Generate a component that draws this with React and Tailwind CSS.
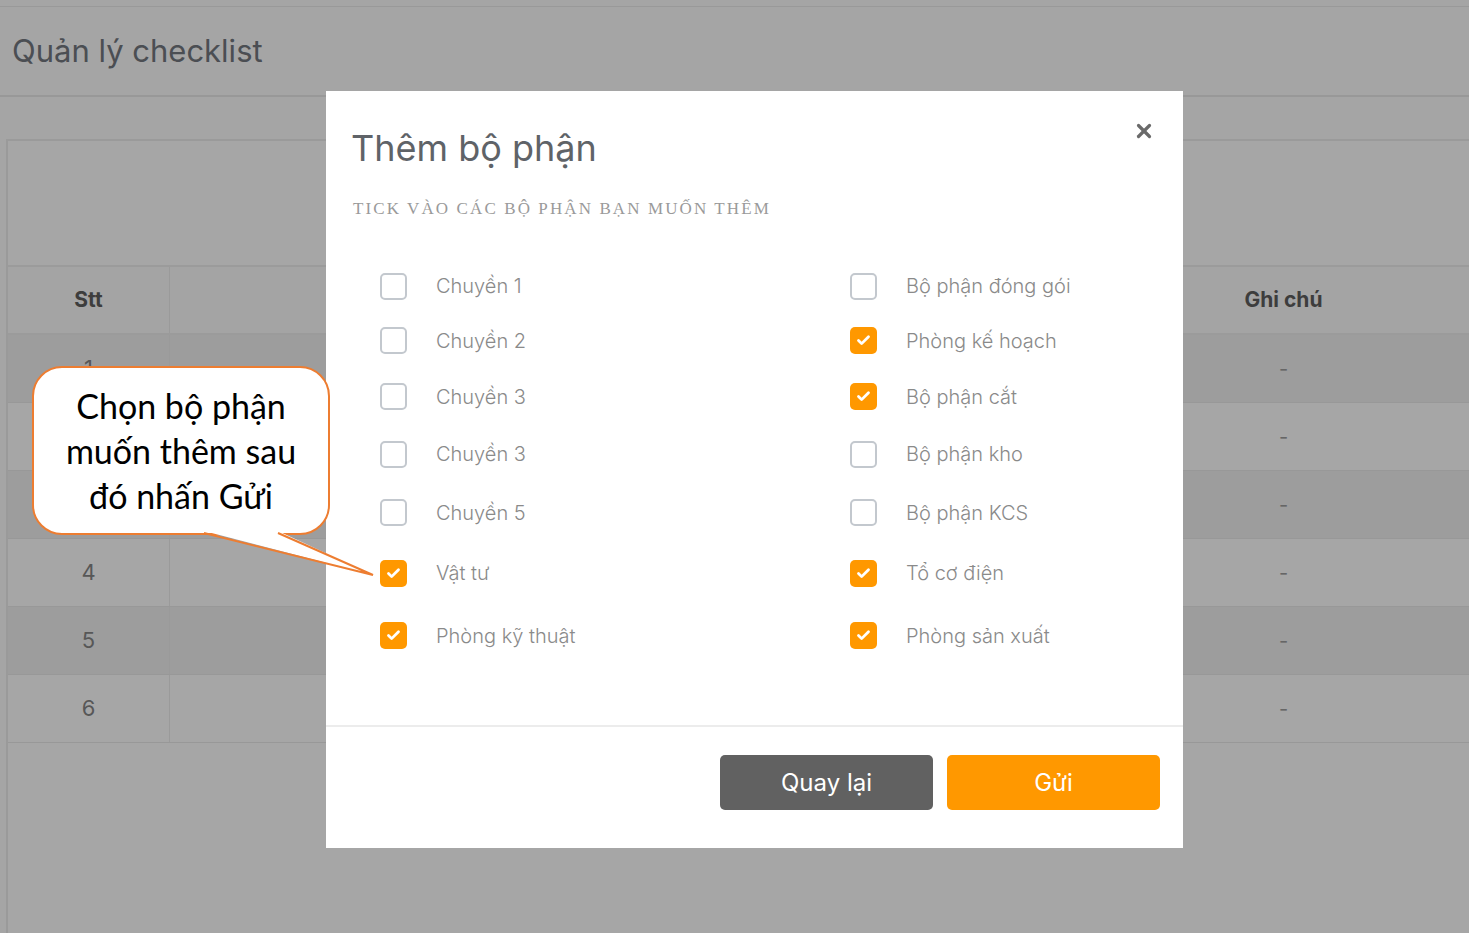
import React from "react";
import { Check, X } from "lucide-react";

const leftItems = [
    { label: "Chuyền 1", checked: false },
    { label: "Chuyền 2", checked: false },
    { label: "Chuyền 3", checked: false },
    { label: "Chuyền 3", checked: false },
    { label: "Chuyền 5", checked: false },
    { label: "Vật tư", checked: true },
    { label: "Phòng kỹ thuật", checked: true },
];

const rightItems = [
    { label: "Bộ phận đóng gói", checked: false },
    { label: "Phòng kế hoạch", checked: true },
    { label: "Bộ phận cắt", checked: true },
    { label: "Bộ phận kho", checked: false },
    { label: "Bộ phận KCS", checked: false },
    { label: "Tổ cơ điện", checked: true },
    { label: "Phòng sản xuất", checked: true },
];

const rowHeights = ["h-[54px]", "h-[55px]", "h-[57px]", "h-[58px]", "h-[59px]", "h-[62px]", "h-[63px]"];

const tableRows = [
    { stt: "1", dark: true },
    { stt: "2", dark: false },
    { stt: "3", dark: true },
    { stt: "4", dark: false },
    { stt: "5", dark: true },
    { stt: "6", dark: false },
];

function Box({ checked }) {
    if (checked) {
        return (
            <span className="flex items-center justify-center w-[27px] h-[27px] rounded-[5px] bg-[#ff9800]">
                <Check size={15} strokeWidth={4.5} className="text-white" />
            </span>
        );
    }
    return <span className="block w-[27px] h-[27px] rounded-[5px] border-2 border-[#c3c8ce] bg-white" />;
}

function CheckRow({ item, height }) {
    return (
        <div className={`flex items-center ${height}`}>
            <Box checked={item.checked} />
            <span className="ml-[29px] text-[20px] font-light text-[#8a8a8a]">{item.label}</span>
        </div>
    );
}

export default function App() {
    return (
        <div className="relative w-[1469px] h-[933px] overflow-hidden bg-[#a5a5a5] font-['Inter',sans-serif]">
            {/* page behind the overlay */}
            <div className="h-[7px] border-b border-[#999]" />
            <div className="h-[90px] flex items-center pl-[12px] border-b-2 border-[#989898]">
                <h1 className="text-[31px] text-[#4b4e53]">Quản lý checklist</h1>
            </div>
            <div className="ml-[6px] mt-[42px] h-[800px] border-l-2 border-t-2 border-[#9a9a9a] bg-[#a6a6a6]">
                <div className="h-[124px]" />
                <div className="flex h-[70px] border-t-2 border-b-2 border-[#9b9b9b] bg-[#a4a4a4]">
                    <div className="w-[162px] flex items-center justify-center border-r border-[#9a9a9a] text-[21px] font-bold text-[#3d3d3d]">
                        Stt
                    </div>
                    <div className="flex-1" />
                    <div className="w-[371px] flex items-center justify-center text-[21px] font-bold text-[#3d3d3d]">
                        Ghi chú
                    </div>
                </div>
                {tableRows.map((row) => (
                    <div
                        key={row.stt}
                        className={`flex h-[68px] border-b border-[#989898] ${row.dark ? "bg-[#9d9d9d]" : "bg-[#a6a6a6]"}`}
                    >
                        <div className="w-[162px] flex items-center justify-center border-r border-[#9a9a9a] text-[22px] text-[#575757]">
                            {row.stt}
                        </div>
                        <div className="flex-1" />
                        <div className="w-[371px] flex items-center justify-center text-[20px] text-[#666]">-</div>
                    </div>
                ))}
            </div>

            {/* modal */}
            <div className="absolute left-[326px] top-[91px] w-[857px] h-[757px] bg-white flex flex-col">
                <button className="absolute right-[28px] top-[29px] text-[#6a6a6a]">
                    <X size={22} strokeWidth={3.5} />
                </button>
                <div className="pt-[35px] px-[25px]">
                    <h2 className="text-[36px] leading-[44px] text-[#5f6368]">Thêm bộ phận</h2>
                    <p className="mt-[27px] ml-[2px] text-[17px] leading-[24px] tracking-[2.1px] uppercase text-[#9a9a9a] font-['Liberation_Serif',serif]">
                        Tick vào các bộ phận bạn muốn thêm
                    </p>
                </div>
                <div className="mt-[38px] grid grid-cols-[470px_1fr] pl-[54px]">
                    <div>
                        {leftItems.map((item, i) => (
                            <CheckRow key={i} item={item} height={rowHeights[i]} />
                        ))}
                    </div>
                    <div>
                        {rightItems.map((item, i) => (
                            <CheckRow key={i} item={item} height={rowHeights[i]} />
                        ))}
                    </div>
                </div>
                <div className="mt-auto border-t-2 border-[#ececec] flex justify-end gap-[14px] pt-[28px] pb-[38px] pr-[23px]">
                    <button className="w-[213px] h-[55px] rounded-[5px] bg-[#616161] text-white text-[24px]">Quay lại</button>
                    <button className="w-[213px] h-[55px] rounded-[5px] bg-[#ff9800] text-white text-[24px]">Gửi</button>
                </div>
            </div>

            {/* callout */}
            <div className="absolute left-[32px] top-[366px] w-[298px] h-[169px]">
                <div className="w-full h-full rounded-[30px] border-2 border-[#ed7d31] bg-white flex items-center justify-center">
                    <p className="text-center text-[34px] leading-[45px] text-black font-['Lato',sans-serif]">
                        Chọn bộ phận
                        <br />
                        muốn thêm sau
                        <br />
                        đó nhấn Gửi
                    </p>
                </div>
                <svg className="absolute left-0 top-0 overflow-visible" width="298" height="169">
                    <polygon points="172,165 246,165 341,209" fill="white" />
                    <polyline points="172,167 341,209 246,167" fill="none" stroke="#ed7d31" strokeWidth="2" />
                </svg>
            </div>
        </div>
    );
}
